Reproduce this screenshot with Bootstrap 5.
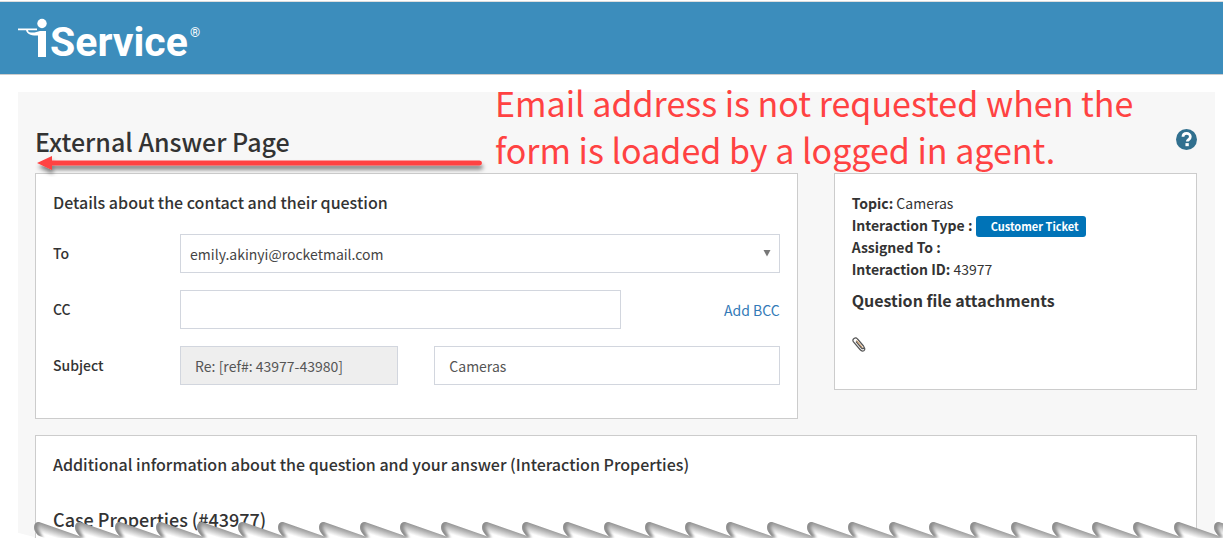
<!DOCTYPE html>
<html lang="en">
<head>
<meta charset="utf-8">
<meta name="viewport" content="width=device-width, initial-scale=1">
<title>External Answer Page</title>
<link href="https://cdn.jsdelivr.net/npm/bootstrap@5.3.0/dist/css/bootstrap.min.css" rel="stylesheet">
<style>
  body { font-family: "Noto Sans CJK SC", sans-serif; font-size: 14px; line-height: 22px; color: #333; background: #fff; }
  .site-header { background: #3c8dbc; border-bottom: 1px solid #ccc; border-top: 1px solid #ddd; margin-top: 1px; padding: 15px 18px 12px; }
  .page-panel { background: #f7f7f7; margin: 17px 8px 0 18px; padding: 33px 18px 0 17px; }
  .page-title { font-size: 25px; line-height: 32px; font-weight: 500; }
  .row { --bs-gutter-x: 36px; }
  .panel-card { background: #fff; border: 1px solid #ccc; padding: 17px; }
  .panel-title { font-size: 16px; line-height: 22px; font-weight: 500; }
  .case-title { font-size: 18px; line-height: 24px; font-weight: 500; margin-top: 32px; }
  .field-row { padding-top: 17px; }
  .field-label { font-weight: 500; padding-top: 8px; }
  .form-control, .form-select { height: 39px; border-radius: 0; border-color: #d2d6de; color: #555; font-size: 14px; line-height: 22px; padding: 7px 14px; }
  .form-select { padding: 8px 9px; color: #444; background-size: 8px 7px; background-position: right 8px center;
    background-image: url("data:image/svg+xml,%3Csvg xmlns='http://www.w3.org/2000/svg' viewBox='0 0 8 7'%3E%3Cpath d='M0.500 0h7L4 6.500z' fill='%23777'/%3E%3C/svg%3E"); }
  .form-control:disabled { background: #eee; }
  .bcc-link { color: #337ab7; }
  .side-card { padding-top: 18px; }
  .meta-line { height: 22px; }
  .type-badge { background: #0073b7; font-size: 11px; line-height: 15px; border-radius: 3px; padding: 3px 7px 3px 15px; }
  .note-text { left: 460px; top: -46px; font-size: 34px; line-height: 47px; color: #ff4242; z-index: 2; }
  .note-arrow { left: 0; top: 20px; z-index: 2; }
  .attach-title { font-size: 16px; line-height: 20px; font-weight: 700; margin: 10px 0 27px; }
  .clip-icon { margin-bottom: 20px; }
  .torn-edge { z-index: 5; height: 18px; }
</style>
</head>
<body class="min-vh-100 vh-100 overflow-hidden d-flex flex-column position-relative">
<header class="site-header flex-shrink-0">
  <svg class="d-block overflow-visible" width="200" height="45" viewBox="0 -1 200 45" role="img" aria-label="iService">
    <g fill="#fff">
      <circle cx="24" cy="5.500" r="4.700"/>
      <path d="M0 10.500h19v1.700h-9c0 2 2 2.300 5 2.300 4 0 5-1.500 8-1.500h5v26h-8V17.500c-5 0-11-.5-12-5.300H0z"/>
      <text x="32" y="38" font-family="Roboto, sans-serif" font-weight="700" font-size="41">Service</text>
      <text x="172" y="19" font-family="Roboto, sans-serif" font-size="13">®</text>
    </g>
  </svg>
</header>
<main class="page-panel flex-grow-1 d-flex flex-column">
  <div class="d-flex justify-content-between position-relative mb-3">
    <h1 class="page-title mb-0">External Answer Page</h1>
    <a class="pt-1" href="#" aria-label="Help">
      <svg class="d-block" width="21" height="21" viewBox="0 0 22 22"><circle cx="11" cy="11" r="11" fill="#31708f"/><path d="M7.300 8.200C7.300 3.500 15 3.500 15 8c0 3-3.200 3-3.200 5.200" fill="none" stroke="#fff" stroke-width="2.900"/><path d="M9.900 14.800h3.500v3.200H9.900z" fill="#fff"/></svg>
    </a>
    <p class="note-text position-absolute mb-0 text-nowrap">Email address is not requested when the<br>form is loaded by a logged in agent.</p>
    <svg class="note-arrow position-absolute" width="456" height="32" viewBox="0 0 456 32" aria-hidden="true">
      <defs><filter id="soft" x="-5%" y="-60%" width="110%" height="260%"><feDropShadow dx="1" dy="4" stdDeviation="2" flood-opacity=".5"/></filter></defs>
      <path d="M2 18 17 11v4.500h427.500a2.500 2.500 0 0 1 0 5H17V25z" fill="#ff4242" filter="url(#soft)"/>
    </svg>
  </div>
  <div class="row align-items-start">
    <div class="col-8">
      <form class="panel-card">
        <h2 class="panel-title mb-1">Details about the contact and their question</h2>
        <div class="row field-row">
          <label class="col-2 field-label" for="to">To</label>
          <div class="col-10"><select class="form-select" id="to"><option>emily.akinyi@rocketmail.com</option></select></div>
        </div>
        <div class="row field-row">
          <label class="col-2 field-label" for="cc">CC</label>
          <div class="col-10"><div class="row align-items-center">
            <div class="col-9"><input class="form-control" id="cc" type="text"></div>
            <div class="col-3 text-end"><a class="bcc-link text-decoration-none" href="#">Add BCC</a></div>
          </div></div>
        </div>
        <div class="row field-row mb-3">
          <label class="col-2 field-label" for="subject">Subject</label>
          <div class="col-4"><input class="form-control" type="text" value="Re: [ref#: 43977-43980]" disabled aria-label="Reference"></div>
          <div class="col-6"><input class="form-control" id="subject" type="text" value="Cameras"></div>
        </div>
      </form>
    </div>
    <div class="col-4">
      <aside class="panel-card side-card">
        <div class="meta-line"><b>Topic:</b> Cameras</div>
        <div class="meta-line"><b>Interaction Type :</b> <span class="badge type-badge">Customer Ticket</span></div>
        <div class="meta-line"><b>Assigned To :</b></div>
        <div class="meta-line"><b>Interaction ID:</b> 43977</div>
        <h2 class="attach-title">Question file attachments</h2>
        <svg class="d-block clip-icon" width="14" height="15" viewBox="0 0 14 15" fill="none"><path d="M4 4.500 9.500 11c1.500 1.500 3.500 0 2-2L5.500 2C3.500-.5-.5 2 1.500 5L8 12.500c2.500 3 6.500 1 4-2.500" stroke="#555" stroke-width="1.200"/><path d="m4.500 3.500 6 7" stroke="#c98a4a"/></svg>
      </aside>
    </div>
  </div>
  <section class="panel-card flex-grow-1 mt-3 border-bottom-0">
    <h2 class="panel-title mb-0">Additional information about the question and your answer (Interaction Properties)</h2>
    <h3 class="case-title mb-0">Case Properties (#43977)</h3>
  </section>
</main>
<svg class="torn-edge position-absolute bottom-0 start-0 w-100" aria-hidden="true">
  <defs>
    <linearGradient id="fade" gradientUnits="userSpaceOnUse" x1="14" y1="4" x2="10" y2="17"><stop offset="0" stop-color="#8c8c8c"/><stop offset=".3" stop-color="#b4b4b4"/><stop offset=".8" stop-color="#fff"/></linearGradient>
    <filter id="haze" x="-60%" y="-60%" width="220%" height="220%"><feGaussianBlur stdDeviation="1.500"/></filter>
    <clipPath id="tooth"><path d="M0 8C0 4 2 2 5 2L8 3 48 17V20H8C5 16 0 12 0 8z"/></clipPath>
    <clipPath id="sheet"><path d="M8 0H9999V20H50L8 4z"/></clipPath>
    <g id="scale" clip-path="url(#tooth)"><path d="M0 0H50V20H0z" fill="url(#fade)"/><path d="M-2 0H5L4 8 9 18H0z" fill="#8c8c8c" filter="url(#haze)"/></g>
  </defs>
  <path d="M0 8 34 17V20H0z" fill="#fff"/>
  <g id="teeth" clip-path="url(#sheet)"></g>
</svg>
<script src="https://cdn.jsdelivr.net/npm/bootstrap@5.3.0/dist/js/bootstrap.bundle.min.js"></script>
<script>
  const teeth = document.getElementById('teeth');
  const count = Math.ceil(window.innerWidth / 40.7);
  for (let i = 0; i <= count; i++) {
    const use = document.createElementNS('http://www.w3.org/2000/svg', 'use');
    use.setAttribute('href', '#scale');
    use.setAttribute('x', Math.round(34 + (i - 1) * 40.7));
    teeth.appendChild(use);
  }
</script>
</body>
</html>
